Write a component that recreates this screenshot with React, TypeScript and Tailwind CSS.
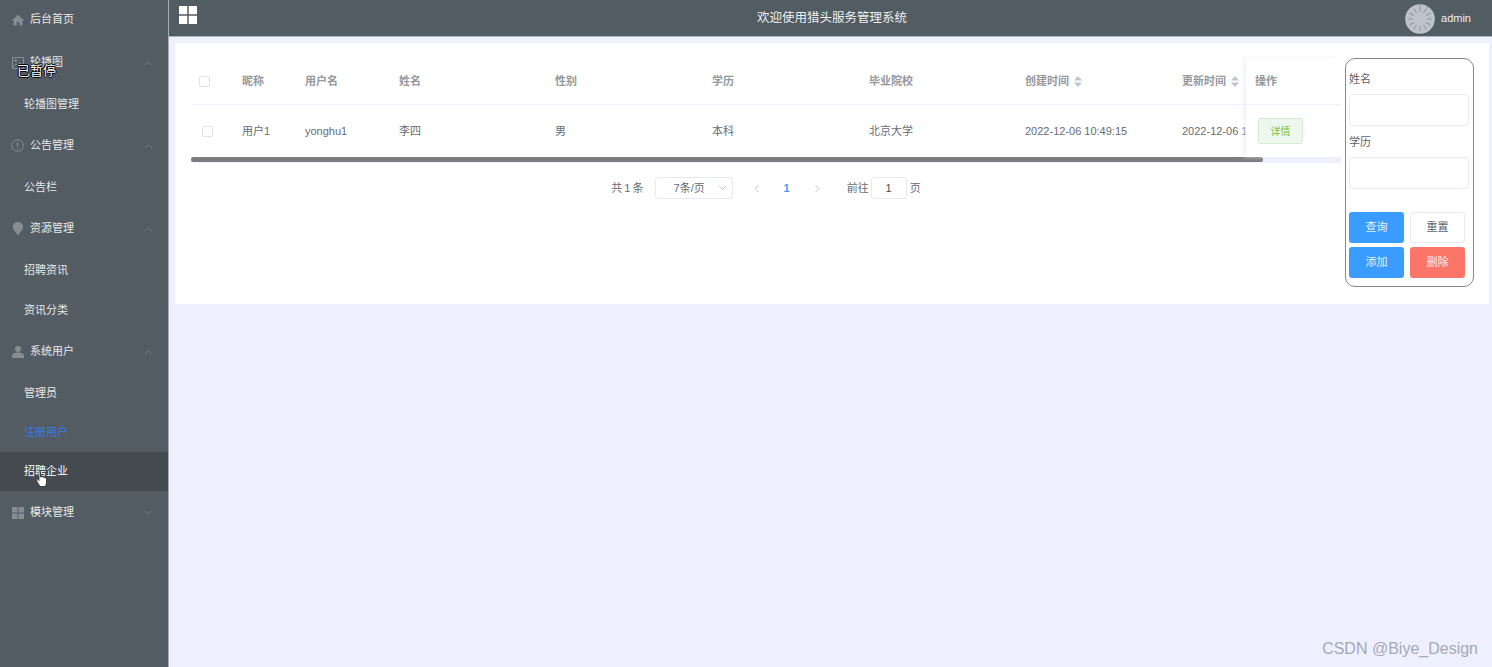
import React from "react";

const FONT = "font-['Liberation_Sans','Noto_Sans_CJK_SC',sans-serif]";

const Home = () => (
  <svg width="12" height="12" viewBox="0 0 12 12" fill="#868e94"><path d="M6 .8 0 6.2l.7.8L1.6 6.300V11.500H4.700V8H7.300V11.500H10.400V6.300L11.300 7 12 6.200Z" /></svg>
);
const Picture = () => (
  <svg width="12" height="12" viewBox="0 0 12 12" fill="none" stroke="#868e94"><rect x=".5" y=".5" width="11" height="11" /><circle cx="3.500" cy="3.500" r="1" fill="#868e94" /><path d="M1 10l3-3 2 2 2-3 3 4" /></svg>
);
const Info = () => (
  <svg width="13" height="13" viewBox="0 0 13 13" fill="none" stroke="#868e94"><circle cx="6.500" cy="6.500" r="5.800" /><path d="M6.500 3v4.500M6.500 9v1.200" strokeWidth="1.200" /></svg>
);
const Drop = () => (
  <svg width="12" height="13" viewBox="0 0 12 13" fill="#868e94"><path d="M6 0C2.800 0 .8 2.300.8 5c0 3 2.800 4.500 3.700 6.300.3.700.6 1.700 1.500 1.700s1.200-1 1.500-1.700C8.400 9.500 11.200 8 11.200 5 11.200 2.300 9.200 0 6 0Z" /></svg>
);
const User = () => (
  <svg width="12" height="12" viewBox="0 0 12 12" fill="#868e94"><circle cx="6" cy="3" r="3" /><path d="M0 12V10C0 8 2.500 7 4.500 6.600H7.500C9.500 7 12 8 12 10V12Z" /></svg>
);
const Grid = ({ size = 12, gap = 1, color = "#868e94" }: { size?: number; gap?: number; color?: string }) => {
  const c = (size - gap) / 2;
  return (
    <svg width={size} height={size} viewBox={`0 0 ${size} ${size}`} fill={color}>
      <rect width={c} height={c} />
      <rect x={c + gap} width={c} height={c} />
      <rect y={c + gap} width={c} height={c} />
      <rect x={c + gap} y={c + gap} width={c} height={c} />
    </svg>
  );
};
const Chevron = ({ up = true, color = "#727b81" }: { up?: boolean; color?: string }) => (
  <svg width="9" height="6" viewBox="0 0 9 6" fill="none" stroke={color} className={up ? "" : "rotate-180"}>
    <path d="M1 5 4.500 1.500 8 5" />
  </svg>
);
const Sort = () => (
  <svg width="8" height="11" viewBox="0 0 8 11" fill="#c0c4cc" className="ml-[5px]">
    <path d="M4 0 8 4.500H0ZM0 6.500H8L4 11Z" />
  </svg>
);
const Spinner = () => (
  <svg width="30" height="31" viewBox="0 0 30 31" className="shrink-0">
    <circle cx="15" cy="16" r="14.800" fill="#bcc3cc" />
    <g stroke="#8f979f" strokeWidth="1">
      {Array.from({ length: 12 }).map((_, i) => (
        <line key={i} x1="15" y1={i < 2 ? 1.500 : 4} x2="15" y2={9} transform={`rotate(${i * 30} 15 16)`} />
      ))}
    </g>
  </svg>
);
const Hand = () => (
  <svg width="12" height="18" viewBox="0 0 12 18" className="absolute left-[36px] top-[18px]">
    <path d="M3 1.500c0-1 1.500-1 1.500 0V7l1-.3 1 .2 1 .2 1 .3c1 .3 2 .8 2 2v3.600l-1 3.500H4L1 11.500.6 9.800c0-.8 1-1 1.500-.3L3 10.500Z" fill="#fff" stroke="#23282c" strokeWidth=".8" />
  </svg>
);

type Row = { label: string; kind: "top" | "parent" | "child"; icon?: React.ReactNode; up?: boolean; active?: boolean; hover?: boolean };
const rows: Row[] = [
  { label: "后台首页", kind: "top", icon: <Home /> },
  { label: "轮播图", kind: "parent", icon: <Picture />, up: true },
  { label: "轮播图管理", kind: "child" },
  { label: "公告管理", kind: "parent", icon: <Info />, up: true },
  { label: "公告栏", kind: "child" },
  { label: "资源管理", kind: "parent", icon: <Drop />, up: true },
  { label: "招聘资讯", kind: "child" },
  { label: "资讯分类", kind: "child" },
  { label: "系统用户", kind: "parent", icon: <User />, up: true },
  { label: "管理员", kind: "child" },
  { label: "注册用户", kind: "child", active: true },
  { label: "招聘企业", kind: "child", hover: true },
  { label: "模块管理", kind: "parent", icon: <Grid />, up: false },
];

const Sidebar = () => (
  <aside className="relative w-[169px] shrink-0 h-full overflow-hidden bg-[#535c63] border-r border-[#a9aeb5]">
    <div className="-mt-[2px] flex flex-col">
      {rows.map((r) =>
        r.kind === "child" ? (
          <div
            key={r.label}
            className={`relative flex items-center pl-[24px] text-[11px] ${r.hover ? "h-[39px] bg-[#434a50] text-white" : r.active ? "h-[39px] text-[#2f7df0]" : "h-[40px] text-[#e6e8ea]"}`}
          >
            {r.label}
            {r.hover && <Hand />}
          </div>
        ) : (
          <div key={r.label} className="h-[43px] flex items-center pl-[11px] pr-[15px] text-[11px] text-[#e6e8ea]">
            <span className="w-[13px] flex justify-center shrink-0">{r.icon}</span>
            <span className="ml-[6px] flex-1">{r.label}</span>
            {r.kind === "parent" && <Chevron up={r.up} />}
          </div>
        )
      )}
    </div>
    <div className="absolute left-[17px] top-[62px] text-[13px] leading-[18px] text-white [text-shadow:1px_0_0_#000,-1px_0_0_#000,0_1px_0_#000,0_-1px_0_#000]">
      已暂停
    </div>
  </aside>
);

const colW = ["w-[51px]", "w-[63px]", "w-[94px]", "w-[156px]", "w-[157px]", "w-[157px]", "w-[156px]", "w-[157px]", "w-[140px]"];

const Box = ({ className = "" }: { className?: string }) => (
  <span className={`block w-[11px] h-[11px] rounded-[2px] border border-[#dfe2ee] bg-white ${className}`} />
);

const Table = () => {
  const head = ["昵称", "用户名", "姓名", "性别", "学历", "毕业院校", "创建时间", "更新时间"];
  const body = ["用户1", "yonghu1", "李四", "男", "本科", "北京大学", "2022-12-06 10:49:15", "2022-12-06 10:49:15"];
  return (
    <div className="w-[1150px] shrink-0">
      <div className="flex">
        <div className="w-[1055px] overflow-hidden">
          <div className="flex w-[1200px] h-[47px] items-center border-b border-[#eeeffb] text-[11px] font-bold text-[#95989e]">
            <div className={`${colW[0]} pl-[8px]`}><Box /></div>
            {head.map((h, i) => (
              <div key={h} className={`${colW[i + 1]} shrink-0 flex items-center`}>
                {h}
                {i >= 6 && <Sort />}
              </div>
            ))}
          </div>
          <div className="flex w-[1200px] h-[52px] items-center text-[11px] text-[#696c72]">
            <div className={`${colW[0]} pl-[11px]`}><Box /></div>
            {body.map((b, i) => (
              <div key={i} className={`${colW[i + 1]} shrink-0 whitespace-nowrap`}>{b}</div>
            ))}
          </div>
        </div>
        <div className="w-[95px] shadow-[-2px_0_4px_rgba(232,234,252,0.7)] bg-white z-10">
          <div className="h-[47px] flex items-center pl-[9px] border-b border-[#eeeffb] text-[11px] font-bold text-[#95989e]">操作</div>
          <div className="h-[52px] flex items-center pl-[12px]">
            <span className="w-[45px] h-[26px] flex items-center justify-center rounded-[3px] bg-[#edf7ee] border border-[#d3ebd5] text-[10px] text-[#73c24c]">详情</span>
          </div>
        </div>
      </div>
      <div className="h-[6px] bg-[#eeefff]">
        <div className="w-[1072px] h-[5px] rounded-full bg-[#7c7c80]" />
      </div>
      <div className="mt-[14px] h-[22px] flex items-center justify-center text-[11px] text-[#696c72]">
        <span className="[word-spacing:-1px]">共 1 条</span>
        <div className="ml-[11px] w-[78px] h-[22px] flex items-center rounded-[3px] border border-[#e6e8f2] pl-[18px] pr-[5px]">
          <span className="flex-1">7条/页</span>
          <Chevron up={false} color="#c0c4cc" />
        </div>
        <span className="ml-[20px]"><svg width="7" height="9" viewBox="0 0 7 9" fill="none" stroke="#c0c4cc"><path d="M5.500 1 2 4.500 5.500 8" /></svg></span>
        <span className="ml-[24px] font-bold text-[#409eff]">1</span>
        <span className="ml-[24px]"><svg width="7" height="9" viewBox="0 0 7 9" fill="none" stroke="#c0c4cc"><path d="M1.500 1 5 4.500 1.500 8" /></svg></span>
        <span className="ml-[26px]">前往</span>
        <span className="ml-[2px] w-[36px] h-[22px] flex items-center justify-center rounded-[3px] border border-[#e6e8f2] text-[#4a4d52]">1</span>
        <span className="ml-[3px]">页</span>
      </div>
    </div>
  );
};

const Input = () => <div className="w-[120px] h-[32px] rounded-[4px] border border-[#e8eaf6] bg-white" />;

const Btn = ({ label, className }: { label: string; className: string }) => (
  <div className={`w-[55px] h-[31px] flex items-center justify-center rounded-[3px] text-[11px] ${className}`}>{label}</div>
);

const Search = () => (
  <div className="ml-[4px] w-[129px] h-[229px] shrink-0 rounded-[10px] border border-[#85888e] pl-[3px] text-[11px] text-[#606266]">
    <div className="h-[35px] pt-[13px] leading-[14px]">姓名</div>
    <Input />
    <div className="h-[31px] pt-[1px] flex items-center">学历</div>
    <Input />
    <div className="mt-[23px] flex gap-[6px]">
      <Btn label="查询" className="bg-[#3a9cff] text-[#e8f3ff]" />
      <Btn label="重置" className="bg-white border border-[#e6e8f4] text-[#606266]" />
    </div>
    <div className="mt-[4px] flex gap-[6px]">
      <Btn label="添加" className="bg-[#3a9cff] text-[#e8f3ff]" />
      <Btn label="删除" className="bg-[#fb7668] text-[#ffecea]" />
    </div>
  </div>
);

export default function App() {
  return (
    <div className={`relative w-full h-screen overflow-hidden flex bg-[#eeefff] ${FONT}`}>
      <Sidebar />
      <div className="flex-1 min-w-0 flex flex-col">
        <header className="relative h-[37px] shrink-0 flex items-center bg-[#525c63] border-b border-[#b0b5bc] pl-[10px] pr-[21px]">
          <div className="-mt-[7px]"><Grid size={18} gap={1.500} color="#ffffff" /></div>
          <div className="flex-1 text-center text-[12.5px] text-[#eef0f2] pl-[62px]">欢迎使用猎头服务管理系统</div>
          <Spinner />
          <span className="ml-[6px] text-[11px] text-[#eef0f2]">admin</span>
        </header>
        <main className="pl-[6px] pr-[3px] pt-[6px]">
          <div className="flex bg-white pl-[16px] pt-[15px] pb-[17px]">
            <Table />
            <Search />
          </div>
        </main>
      </div>
      <div className="absolute right-[14px] bottom-[8px] text-[16px] leading-[20px] text-[#a6a9b4]">CSDN @Biye_Design</div>
    </div>
  );
}
